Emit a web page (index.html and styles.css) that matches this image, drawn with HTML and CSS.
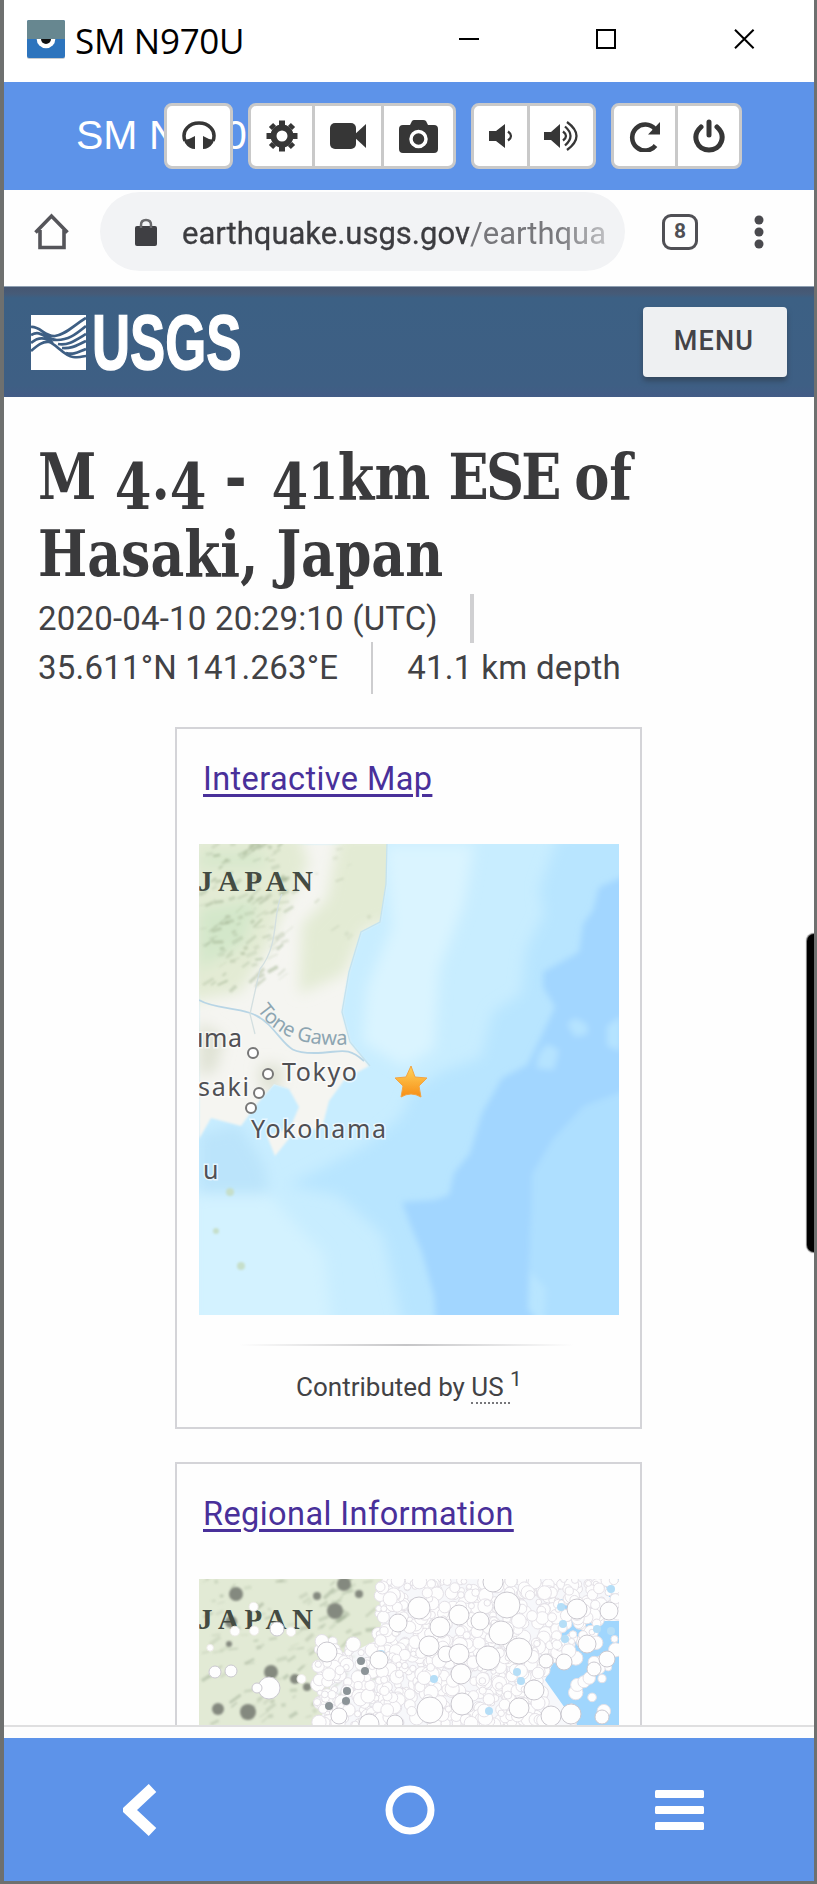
FILE: index.html
```html
<!DOCTYPE html>
<html lang="en">
<head>
<meta charset="utf-8">
<title>SM N970U</title>
<link rel="stylesheet" href="styles.css">
</head>
<body>
<div class="window">
  <header class="titlebar">
    <svg class="app-icon" width="38" height="39" viewBox="0 0 38 39"><rect y="1" width="38" height="38" rx="2" fill="#c9cccf"/><rect width="38" height="38" rx="2" fill="#2d74bd"/><circle cx="19" cy="19" r="9.3" fill="#fff"/><circle cx="19" cy="19" r="5" fill="#111"/><path d="M0 19V2a2 2 0 0 1 2-2h34a2 2 0 0 1 2 2v17z" fill="#678790"/></svg>
    <span class="title">SM N970U</span>
    <svg class="controls" width="296" height="20" viewBox="0 0 296 20" fill="none" stroke="#000" stroke-width="2"><path d="M0 10h20M138 1h18v18h-18zM276 .7l18.600 18.600M294.600.7L276 19.300"/></svg>
  </header>
  <div class="toolbar">
    <span class="device">SM N970U</span>
    <div class="buttons">
      <div class="group"><button class="b1"><svg width="34" height="30" viewBox="0 0 34 30"><path d="M3 20C-1 9 8 2 17 2s18 7 14 18" fill="none" stroke="#363636" stroke-width="3.500"/><path d="M13 15v13q-6 0-10-6l-1-3 5-1zM21 15v13q6 0 10-6l1-3-5-1z" fill="#363636"/></svg></button></div>
      <div class="group"><button class="b2"><svg width="32" height="32" viewBox="-16 -16 32 32"><circle r="8.500" fill="none" stroke="#363636" stroke-width="6"/><path d="M0-15.500v5M0 15.500v-5M-15.500 0h5M15.500 0h-5M-11-11l3 3M11 11l-3-3M-11 11l3-3M11-11l-3 3" stroke="#363636" stroke-width="6"/></svg></button><button class="b3"><svg width="36" height="26" viewBox="0 0 36 26" fill="#363636"><rect width="26" height="26" rx="5"/><path d="M23 13L36 1v24z"/></svg></button><button class="b4"><svg width="39" height="33" viewBox="0 0 39 33"><path d="M4 5h7l2-4q1-1 2-1h9q2 0 3 1l2 4h6q4 0 4 4v20q0 4-4 4H4q-4 0-4-4V9q0-4 4-4z" fill="#363636"/><circle cx="19.500" cy="19" r="7.500" fill="none" stroke="#fff" stroke-width="3.500"/></svg></button></div>
      <div class="group"><button class="b5"><svg width="24" height="26" viewBox="0 0 24 26"><path d="M0 8h7l9-7v24l-9-7H0z" fill="#363636"/><path d="M19 8.500q6 4.500 0 9" fill="none" stroke="#363636" stroke-width="2.300"/></svg></button><button class="b6"><svg width="35" height="30" viewBox="0 0 35 30"><path d="M0 11h7l9-8v24l-9-8H0z" fill="#363636"/><path d="M19 10.500q6 4.500 0 9M21 5.500q11 9.500 0 19M23 1q19 14 0 28" fill="none" stroke="#363636" stroke-width="2.300"/></svg></button></div>
      <div class="group"><button class="b7"><svg width="32" height="31" viewBox="0 0 32 31"><path d="M26 8A13 13 0 1 0 26.500 24.500" fill="none" stroke="#363636" stroke-width="4.600"/><path d="M31 1v12.500H19z" fill="#363636"/></svg></button><button class="b8"><svg width="32" height="34" viewBox="0 0 32 34" fill="none" stroke="#363636" stroke-width="5" stroke-linecap="round"><path d="M8 8C-2 17 4 31 16 31S34 17 24 8M16 3v13"/></svg></button></div>
    </div>
  </div>
  <div class="browser">
    <svg class="home" width="38" height="38" viewBox="0 0 38 38" fill="none" stroke="#55555a" stroke-width="3.600"><path d="M2.500 19.500L18.500 3l16 16.500M7 17v17.500h24V17"/></svg>
    <div class="omnibox">
      <svg width="22" height="28" viewBox="0 0 22 28"><rect y="8" width="22" height="20" rx="2" fill="#3f3f43"/><path d="M6 10V7q0-5 5-5t5 5v3" fill="none" stroke="#69696c" stroke-width="2.500"/></svg>
      <div class="url"><span class="host">earthquake.usgs.gov</span><span class="path">/earthqua</span></div>
    </div>
    <span class="tabs">8</span>
    <svg class="more" width="10" height="34" viewBox="0 0 10 34" fill="#4a4a4e"><circle cx="5" cy="5" r="4.500"/><circle cx="5" cy="17" r="4.500"/><circle cx="5" cy="29" r="4.500"/></svg>
  </div>
  <div class="site-header">
    <svg class="mark" width="55" height="55" viewBox="0 0 55 55"><rect width="55" height="55" fill="#fff"/><g fill="none" stroke="#3e5f84" stroke-width="2.700"><path d="M0 12c9-1 14 10 24 9S42 11 55 3M0 20c10-6 15 5 26 5S44 20 55 11M0 28c9-8 17-4 22 0M0 36c7-6 12-10 18-9s15 14 24 15 9-1 13-1M27 29c10 2 18-4 28-10M31 33c10 1 15-3 24-7M35 38c8 2 12-1 20-4"/></g></svg>
    <span class="brand">USGS</span>
    <button class="menu">MENU</button>
  </div>
  <main class="page">
    <h1><span class="l1">M <i class="desc">4</i>.<i class="desc">4</i> <i class="dash">-</i> <i class="desc">4</i><i class="one">1</i>km <i class="dir">ESE </i>of</span><span class="l2">Hasaki, Japan</span></h1>
    <div class="meta">
      <div class="row"><span class="date">2020-04-10 20:29:10 (UTC)</span><i class="bar thick"></i></div>
      <div class="row"><span class="coord">35.611°N 141.263°E</span><i class="bar"></i><span class="depth">41.1 km depth</span></div>
    </div>
    <section class="card">
      <h2><a class="im">Interactive Map</a></h2>
      <svg class="map" width="420" height="471" viewBox="0 0 420 471">
        <defs>
          <filter id="soft" x="-10%" y="-10%" width="120%" height="120%"><feGaussianBlur stdDeviation="7"/></filter>
          <filter id="fine"><feGaussianBlur stdDeviation="1.200"/></filter>
          <filter id="mid" x="-10%" y="-10%" width="120%" height="120%"><feGaussianBlur stdDeviation="3"/></filter>
          <clipPath id="land"><path d="M0 0H188L187 40 181 78 162 88 150 128 143 168 151 198 170 222 146 235 130 257 124 280 100 294 92 292 76 312 68 292 91 284 100 263 90 245 75 240 58 260 42 282 12 274 0 295z"/></clipPath>
          <linearGradient id="gold" x2="0" y2="1"><stop offset="0" stop-color="#ffd45c"/><stop offset="1" stop-color="#f78e16"/></linearGradient>
        </defs>
        <rect width="420" height="471" fill="#c8edff"/>
        <g filter="url(#soft)">
          <path d="M440-10H360l-20 55 5 25-18 35-5 45-28 18-12 45-40 15-30 20-10 25-35 28-38 20-40 20 50 10 45 40 20 90H440z" fill="#b8e5ff"/>
          <path d="M185 0h90l-10 60-25 65-5 80-30 18-42-25 5-55 25-60z" fill="#daf4ff"/>
          <path d="M70 350l35 40 20 20 10 90H-10V350z" fill="#d3f2ff"/>
          <path d="M0 290l40-10 25 40 5 30H0z" fill="#bbe4fb"/>
        </g>
        <g filter="url(#mid)">
          <path d="M430 30l-30 13-6 23-10 14-4 28-18 10-18 10v15l12 20-18 38-10 20-25 13-20 35-12 40-16 20-5 22-15 5-32 2 8 22 12 28 12 44 4 62H345l2-27-18-22 3-93 25-55 30-28 43-35z" fill="#a2d6ff"/>
          <path d="M430 245v240h-85l2-40-16-18 2-97 21-35 31-33z" fill="#aedfff"/>
          <path d="M368 180l8-6 12 6 1 10-13 3zM340 210l8-10 12 6-5 20-18-2zM408 182l14-10v35l-14-5z" fill="#b5e3ff"/>
        </g>
        <g filter="url(#fine)">
          <path d="M0 0H188L187 40 181 78 162 88 150 128 143 168 151 198 170 222 146 235 130 257 124 280 100 294 92 292 76 312 68 292 91 284 100 263 90 245 75 240 58 260 42 282 12 274 0 295z" fill="#f5f5f1"/>
        </g>
        <g clip-path="url(#land)"><g filter="url(#soft)"><path d="M-10-10h110l10 30-25 45-15 38-28 45-52 10zM140-10h60v85l-35 10-20 45-45 20 3-70 25-25z" fill="#e3ebd4"/><path d="M0 65l60-10-15 45-45 25zM0 10h65v12H0z" fill="#d3e7ca"/><path d="M0 178l25 15-8 34-17 5zM60 220l25 2-5 25H62z" fill="#dfe2d4"/></g><g id="terrain" filter="url(#fine)"></g></g>
        <path d="M188 0l-1 40-6 38-19 10-12 40-7 40 8 30 20 24" fill="none" stroke="#c3e2ef" stroke-width="1.300"/>
        <path d="M0 156c20 12 50 4 70 25s18 28 45 28 32-8 50 8" fill="none" stroke="#b8d5e5" stroke-width="1.800"/>
        <path d="M83 50c-10 20-2 50-22 75l-10 45 5 20" fill="none" stroke="#d3dfe0" stroke-width="1.300"/>
        <g fill="#c6dfca" filter="url(#fine)"><circle cx="31" cy="348" r="4"/><circle cx="17" cy="387" r="3"/><circle cx="42" cy="422" r="4"/></g>
        <text class="country" x="-1" y="47" textLength="115">JAPAN</text>
        <path id="river" d="M58 166q28 41 97 34" fill="none"/>
        <text class="water"><textPath href="#river" textLength="102">Tone Gawa</textPath></text>
        <g class="city"><text x="-2" y="203" textLength="45">ıma</text><text x="83" y="237" textLength="75">Tokyo</text><text x="-1" y="252" textLength="51">saki</text><text x="52" y="294" textLength="135">Yokohama</text><text x="4" y="335">u</text></g>
        <g fill="#fff" stroke="#777" stroke-width="2"><circle cx="54" cy="209" r="5"/><circle cx="69" cy="230" r="5"/><circle cx="60" cy="249" r="5"/><circle cx="52" cy="264" r="5"/></g>
        <path d="M212 222l4 11 12 1-8 8 2 11q-10-6-20 0l2-11-8-8 11-1z" fill="url(#gold)" stroke="#f3a443"/>
      </svg>
      <div class="rule"></div>
      <p>Contributed by <span class="abbr">US&nbsp;</span><sup>1</sup></p>
    </section>
    <section class="card second">
      <h2><a class="ri">Regional Information</a></h2>
      <svg class="map regional" width="420" height="146" viewBox="0 0 420 146">
        <rect width="420" height="146" fill="#f7f8fb"/>
        <path d="M355 20l20 0 20 22 25 0v104h-42l-32-45 14-30zM405 0h15v18h-10z" fill="#a0d6fd"/>
        <path d="M0 0h188l-8 60-40 20-20 66H0z" fill="#e2ead5"/>
        <g id="texture" filter="url(#fine)"></g>
        <text class="country" x="-1" y="50" textLength="115">JAPAN</text>
        <g id="quakes"></g>
      </svg>
    </section>
    <div class="edge-handle"></div>
  </main>
  <div class="strip"></div>
  <nav class="navbar">
    <svg width="34" height="52" viewBox="0 0 34 52"><path d="M29.500 4L6 26l23.500 22" fill="none" stroke="#fff" stroke-width="11"/></svg>
    <svg class="circle" width="50" height="50" viewBox="0 0 50 50"><circle cx="25" cy="25" r="21" fill="none" stroke="#fff" stroke-width="7"/></svg>
    <svg width="49" height="40" viewBox="0 0 49 40" fill="#fff"><rect width="49" height="8" rx="1.500"/><rect y="16" width="49" height="8" rx="1.500"/><rect y="32" width="49" height="8" rx="1.500"/></svg>
  </nav>
</div>
<script src="maps.js"></script>
</body>
</html>
```
FILE: styles.css
```css
* { box-sizing: border-box; }
body { margin: 0; background: #fff; font-family: Roboto, sans-serif; }
.window { width: 817px; height: 1884px; border: solid #6e706f; border-width: 0 3px 3px 4px; display: flex; flex-direction: column; overflow: hidden; background: #fefefe; }
svg { display: block; flex: none; }
button { font: inherit; margin: 0; padding: 0; }
.titlebar { height: 82px; flex: none; display: flex; align-items: center; padding: 0 59px 4px 23px; background: #fff; }
.title { font: 35px "Open Sans", sans-serif; margin-left: 10px; flex: 1; color: #000; letter-spacing: -.3px; padding-top: 2px; }
.app-icon { margin-top: 1px; }
.toolbar { height: 108px; flex: none; background: #5d93e9; display: grid; align-items: center; }
.toolbar > * { grid-area: 1 / 1; }
.device { font: 41px "Liberation Sans", sans-serif; color: #fff; padding: 0 0 2px 72px; }
.buttons { display: flex; gap: 15px; padding-left: 160px; z-index: 1; }
.group { height: 66px; display: flex; border: 3px solid #c9c9c9; border-radius: 8px; background: #fff; overflow: hidden; }
.group button { border: 0; background: none; display: flex; align-items: center; justify-content: center; }
.group button + button { border-left: 3px solid #c9c9c9; }
.b1 { width: 63px; } .b2 { width: 61px; } .b3 { width: 69px; } .b4 { width: 72px; }
.b5 { width: 53px; } .b6 { width: 66px; } .b7 { width: 61px; } .b8 { width: 64px; }
.browser { height: 96px; flex: none; display: flex; padding: 2px 50px 15px 29px; align-items: center; background: #fefefe; }
.omnibox { margin-left: 29px; width: 525px; height: 79px; border-radius: 40px; background: #f2f3f5; display: flex; align-items: center; padding: 0 18px 0 35px; }
.url { margin-left: 25px; width: 425px; overflow: hidden; white-space: nowrap; font-size: 31px; color: #3c3c40; -webkit-mask-image: linear-gradient(90deg, #000 88%, rgba(0,0,0,.4)); padding-top: 3px; }
.host { -webkit-text-stroke: .3px #3c3c40; }
.path { color: #77777b; }
.tabs { width: 36px; height: 36px; margin-left: 37px; border: 3.500px solid #505055; border-radius: 9px; font: bold 21px/29px Roboto, sans-serif; text-align: center; color: #505055; }
.more { margin-left: auto; }
.site-header { height: 111px; flex: none; display: flex; align-items: center; padding: 0 27px 0 27px; background: linear-gradient(#455671 0, #465b78 7px, #3c6084 11px, #3e5f84 90%, #435b86); border-top: 1px solid #8fa0b2; }
.brand { font: bold 77px/60px "Liberation Sans", sans-serif; color: #fff; margin-left: 6px; width: 150px; transform: scaleX(.685); transform-origin: 0 50%; flex: none; -webkit-text-stroke: 1.500px #fff; }
.menu { margin: 0 0 1px auto; width: 144px; height: 70px; border: 0; border-radius: 4px; background: #eef0f2; color: #434347; font: 500 27px Roboto, sans-serif; letter-spacing: 1.200px; padding: 0 2px 2px 0; box-shadow: 0 4px 5px #344960; }
.page { position: relative; height: 1328px; flex: none; overflow: hidden; padding: 42px 0 0 34px; color: #424245; background: #fefefe; }
h1 { margin: 0; font: bold 63px/77px "DejaVu Serif Condensed", "DejaVu Serif", serif; font-stretch: condensed; color: #3a3a3c; }
h1 span { display: block; width: max-content; white-space: nowrap; transform-origin: 0 50%; }
h1 i { font-style: normal; line-height: 0; }
.desc { vertical-align: -10px; }
.one { font-size: 51px; }
.dash { margin-right: 7px; }
.dir { letter-spacing: -3px; }
.l1 { transform: scaleX(.93); }
.l2 { transform: scaleX(.92); }
.meta { font-size: 33px; padding-top: 1px; }
.row { display: flex; align-items: center; height: 49px; white-space: nowrap; }
.date { letter-spacing: .2px; }
.coord { letter-spacing: .2px; }
.depth { letter-spacing: .3px; }
.bar { width: 2px; height: 52px; background: #cdcdcf; margin: 0 34px 0 33px; }
.bar.thick { width: 4px; height: 49px; background: #d0d0d2; margin-left: 32px; }
.card { width: 467px; height: 702px; margin: 35px 0 0 137px; border: 2px solid #d4d4d8; padding: 0 21px 0 22px; }
.card.second { margin-top: 33px; }
h2 { height: 115px; margin: 0; padding: 29px 0 0 4px; font-weight: 400; font-size: 32.500px; line-height: 42px; }
h2 a { color: #49309a; text-decoration: underline; text-decoration-thickness: 3px; text-underline-offset: 4px; }
.im { letter-spacing: .4px; }
.ri { letter-spacing: .42px; }
.map { overflow: hidden; }
.country { font: bold 29px "Liberation Serif", serif; fill: #444b42; }
.city { font: 25px "Noto Sans", sans-serif; fill: #505054; paint-order: stroke; stroke: #fff; stroke-opacity: .6; stroke-width: 3px; }
.water { font: 20px "Noto Sans", sans-serif; fill: #8da5b1; }
.rule { height: 2px; margin: 29px 45px 0 40px; background: linear-gradient(90deg, transparent, #c5c5c7, transparent); }
.card p { margin: 23px 0 0; text-align: center; font-size: 26px; line-height: 36px; }
.abbr { border-bottom: 2px dotted #77777b; }
sup { font-size: 21px; line-height: 0; }
.edge-handle { position: absolute; right: 0; top: 537px; width: 7px; height: 318px; border-radius: 8px 0 0 8px; background: #000; box-shadow: 0 0 1px 1px #777; }
.strip { height: 13px; flex: none; border-top: 2px solid #dfdfe0; background: #fdfdfd; }
.navbar { height: 143px; flex: none; display: flex; align-items: center; justify-content: space-between; padding: 0 110px 0 119px; background: #5d93e9; }
.circle { margin: 1px 0 0 7px; }
```
FILE: maps.js
```js
// Seeded generator so the relief and epicentres stay identical on every load.
let seed = 71;
const rand = () => (seed = (seed * 16807) % 2147483647) / 2147483647;
const NS = 'http://www.w3.org/2000/svg';
function add(parent, tag, attrs) {
  const el = document.createElementNS(NS, tag);
  for (const k in attrs) el.setAttribute(k, attrs[k]);
  parent.appendChild(el);
}
function relief(parent, count, w, h, color) {
  for (let i = 0; i < count; i++) {
    const x = rand() * w, y = rand() * h, s = 3 + rand() * 8;
    add(parent, 'path', { d: `M${x} ${y}l${s} ${-s * rand()}`, stroke: color, 'stroke-width': 1 + rand() * 3, 'stroke-opacity': .2 + rand() * .4 });
  }
}
relief(document.getElementById('terrain'), 120, 85, 150, '#a3b494');
relief(document.getElementById('terrain'), 25, 180, 130, '#c4ceb5');
const texture = document.getElementById('texture');
relief(texture, 140, 180, 146, '#a5b39a');
[[37,15,7],[136,32,8],[145,5,7],[32,43,6],[72,93,7],[96,100,5],[49,133,8],[19,130,6],[118,17,4],[160,15,4],[108,108,4],[185,11,4],[30,65,3]]
  .forEach(([cx, cy, r]) => add(texture, 'circle', { cx, cy, r, fill: '#84897f' }));
const quakes = document.getElementById('quakes');
const dot = (cx, cy, r, stroke = '#cbc9d0') => add(quakes, 'circle', { cx, cy, r, fill: '#fefefe', stroke, 'stroke-width': 1 });
for (let i = 0; i < 1100; i++) {
  const x = 118 + rand() * 302, y = rand() * 146;
  if (x < 178 && y < 60 + rand() * 14) continue;
  if (x > 345 && y > 40 && (x - 345) * .8 + y > 90 && rand() < .86) continue;
  dot(x, y, 2.500 + rand() * 5, '#e4e1e7');
}
for (let i = 0; i < 7; i++) dot(rand() * 115, 20 + rand() * 85, 3 + rand() * 2, '#eeece8');
[[362,28],[364,45],[398,50],[412,52],[318,93],[322,102],[290,132],[235,100],[182,75],[412,10],[366,60]]
  .forEach(([cx, cy]) => add(quakes, 'circle', { cx, cy, r: 4, fill: '#b5def7' }));
[[162,82],[166,92],[148,112],[147,122],[130,127]]
  .forEach(([cx, cy]) => add(quakes, 'circle', { cx, cy, r: 4, fill: '#8c9498' }));
[[70,109,11],[58,109,5],[16,93,6],[32,92,6],[78,50,7],[128,73,10],[180,81,9],[220,29,11],[199,44,9],[260,36,10],[281,42,9],[308,26,13],[241,48,10],[302,54,12],[230,67,10],[247,75,8],[260,75,10],[289,79,12],[320,72,13],[262,95,10],[335,111,10],[231,131,13],[263,125,11],[320,129,10],[352,137,10],[372,135,10],[378,30,10],[410,32,9],[388,65,9],[365,83,8],[395,90,7],[408,80,8],[403,138,7],[294,3,10],[170,145,10],[196,144,8],[347,82,7],[140,137,8]]
  .forEach(q => dot(...q));
```
